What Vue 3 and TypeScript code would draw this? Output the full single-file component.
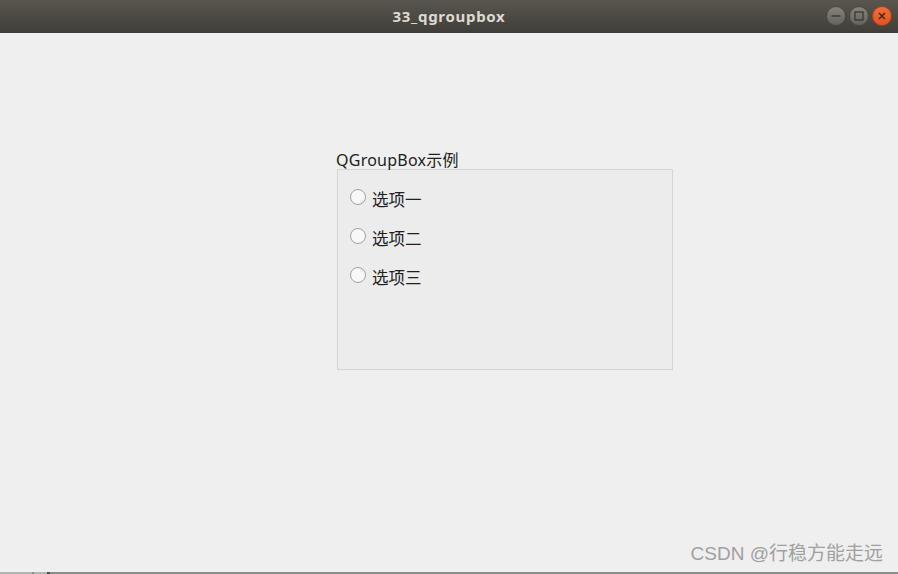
<template>
  <div class="window">
    <header class="titlebar">
      <span class="title">33_qgroupbox</span>
      <div class="controls">
        <button class="ctl">
          <svg width="12" height="12" viewBox="0 0 12 12"><path d="M1.5 6h9" stroke="#3a3832" stroke-width="1.4" /></svg>
        </button>
        <button class="ctl">
          <svg width="12" height="12" viewBox="0 0 12 12"><rect x="2" y="2" width="8" height="8" fill="none" stroke="#3a3832" stroke-width="1.3" /></svg>
        </button>
        <button class="ctl close">
          <svg width="12" height="12" viewBox="0 0 12 12"><path d="M3 3l6 6M9 3l-6 6" stroke="#4a2412" stroke-width="1.5" /></svg>
        </button>
      </div>
    </header>
    <main class="content">
      <section class="group">
        <div class="group-title">QGroupBox示例</div>
        <div class="group-body">
          <label v-for="opt in options" :key="opt" class="radio">
            <span class="dot"></span>
            <span class="radio-label">{{ opt }}</span>
          </label>
        </div>
      </section>
      <div class="watermark">CSDN @行稳方能走远</div>
    </main>
    <div class="bottom-edge"></div>
  </div>
</template>
<script setup lang="ts">
const options: string[] = ['选项一', '选项二', '选项三']
</script>
<style>
html, body { margin: 0; background: #efefef; }
</style>
<style scoped>
.window {
  position: relative;
  width: 898px; height: 574px;
  display: flex; flex-direction: column;
  overflow: hidden;
  background: #efefef;
  font-family: "Noto Sans", "Noto Sans CJK SC", sans-serif;
}
.titlebar {
  position: relative;
  flex: none;
  height: 33px;
  display: flex; align-items: center; justify-content: center;
  background: linear-gradient(#5a564e, #403e38);
}
.title {
  color: #dcdad5;
  font-size: 15px;
  font-weight: 700;
  letter-spacing: 0.7px;
  transform: translateY(-1px);
}
.controls {
  position: absolute; right: 6px; top: 6px;
  display: flex; gap: 3px;
}
.ctl {
  width: 20px; height: 20px;
  padding: 0;
  display: flex; align-items: center; justify-content: center;
  border: 1px solid #4a4841;
  border-radius: 50%;
  background: linear-gradient(#85827a, #66635c);
}
.close {
  border-color: #a8411c;
  background: linear-gradient(#f0703a, #e2541d);
}
.content {
  flex: 1;
  padding: 118px 0 0 336px;
}
.group { width: 337px; }
.group-title {
  height: 18px;
  font-size: 16px;
  line-height: 18px;
  letter-spacing: 0.25px;
  color: #22201d;
  white-space: nowrap;
}
.group-body {
  box-sizing: border-box;
  margin-left: 1px;
  width: 336px; height: 201px;
  padding: 13px 12px 0;
  display: flex; flex-direction: column; gap: 9px;
  border: 1px solid #d4d4d4;
  background: #ececec;
}
.radio {
  height: 30px;
  display: flex; align-items: center; gap: 6px;
}
.dot {
  box-sizing: border-box;
  width: 16px; height: 16px;
  margin-top: -3px;
  border: 1px solid #a2a2a2;
  border-radius: 50%;
  background: #f8f8f8;
}
.radio-label {
  padding-top: 2px;
  font-size: 16.5px;
  color: #22201d;
}
.watermark {
  position: absolute; right: 15px; bottom: 9px;
  font-family: "Liberation Sans", "Noto Sans CJK SC", sans-serif;
  font-size: 19px;
  line-height: 22px;
  color: #a0a0a0;
  white-space: nowrap;
}
.bottom-edge {
  flex: none;
  height: 2px;
  background: linear-gradient(90deg,
    #b4b4b4 0, #b4b4b4 32px, #8e8e8e 32px, #8e8e8e 34px, #b4b4b4 34px,
    #b4b4b4 47px, #555 47px, #555 50px, #8c8c8c 50px);
}
</style>
